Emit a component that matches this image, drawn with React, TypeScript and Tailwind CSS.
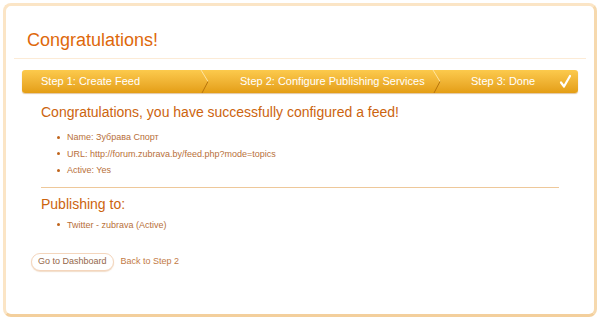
const ITEMS = [
  "Name: Зубрава Спорт",
  "URL: http://forum.zubrava.by/feed.php?mode=topics",
  "Active: Yes",
];

function Chevron() {
  return (
    <svg width="10" height="23" viewBox="0 0 10 23" className="shrink-0">
      <path d="M1 0 L8 11.5" stroke="#fde3a0" strokeWidth="1" fill="none" />
      <path d="M8 11.5 L2 23" stroke="#b7740c" strokeWidth="1" fill="none" />
    </svg>
  );
}

function Check() {
  return (
    <svg width="13" height="15" viewBox="0 0 13 15">
      <path d="M2 8.5 L5 12.5 L11 2" stroke="#ffffff" strokeWidth="2.2" fill="none" strokeLinecap="round" strokeLinejoin="round" />
    </svg>
  );
}

export default function App() {
  return (
    <div className="h-[320px] w-[600px] bg-white p-[3px] font-['Liberation_Sans',Arial,sans-serif]">
      <div className="h-full w-full rounded-[8px] border-[3px] border-[#fbe5c6] border-b-[#f3cf9c] border-r-[#f6d9ae] bg-white">
        <div className="px-[21px] pt-[22px] pb-[6px]">
          <h1 className="text-[18px] leading-[24px] text-[#de680b]">Congratulations!</h1>
        </div>
        <div className="mx-[8px] h-px bg-[#fcebd6]" />

        <div className="mx-[16px] mt-[11px] flex h-[23px] items-center rounded-[3px] bg-gradient-to-b from-[#fcca4c] to-[#e49e12] text-[11px] text-white shadow-[0_1px_1px_rgba(180,110,20,0.4)]">
          <div className="w-[178px] shrink-0 pl-[19px]">Step 1: Create Feed</div>
          <Chevron />
          <div className="w-[222px] shrink-0 pl-[30px]">Step 2: Configure Publishing Services</div>
          <Chevron />
          <div className="flex flex-1 items-center justify-between pl-[29px] pr-[6px]">
            <span>Step 3: Done</span>
            <Check />
          </div>
        </div>

        <div className="px-[35px] pt-[10px]">
          <h2 className="text-[14px] leading-[18px] text-[#cc640e]">
            Congratulations, you have successfully configured a feed!
          </h2>
          <ul className="mt-[8px] pl-[16px] text-[9px] leading-[16.5px] text-[#b8703a]">
            {ITEMS.map((t) => (
              <li key={t} className="flex items-center gap-[7px]">
                <span className="h-[3px] w-[3px] rounded-full bg-[#c0651c]" />
                {t}
              </li>
            ))}
          </ul>
          <div className="mt-[8px] h-px bg-[#eec89a]" />
          <h2 className="mt-[7px] text-[14px] leading-[18px] text-[#cc640e]">Publishing to:</h2>
          <ul className="mt-[4px] pl-[16px] text-[9px] leading-[16px] text-[#b8703a]">
            <li className="flex items-center gap-[7px]">
              <span className="h-[3px] w-[3px] rounded-full bg-[#c0651c]" />
              Twitter - zubrava (Active)
            </li>
          </ul>
        </div>

        <div className="mt-[20px] flex items-center gap-[7px] pl-[25px] text-[9px]">
          <button className="h-[18px] rounded-full border border-[#f4d6bd] bg-white px-[6px] text-[#94674a] shadow-[0_1px_1px_rgba(230,190,150,0.5)]">
            Go to Dashboard
          </button>
          <a className="text-[#c27a45]">Back to Step 2</a>
        </div>
      </div>
    </div>
  );
}
